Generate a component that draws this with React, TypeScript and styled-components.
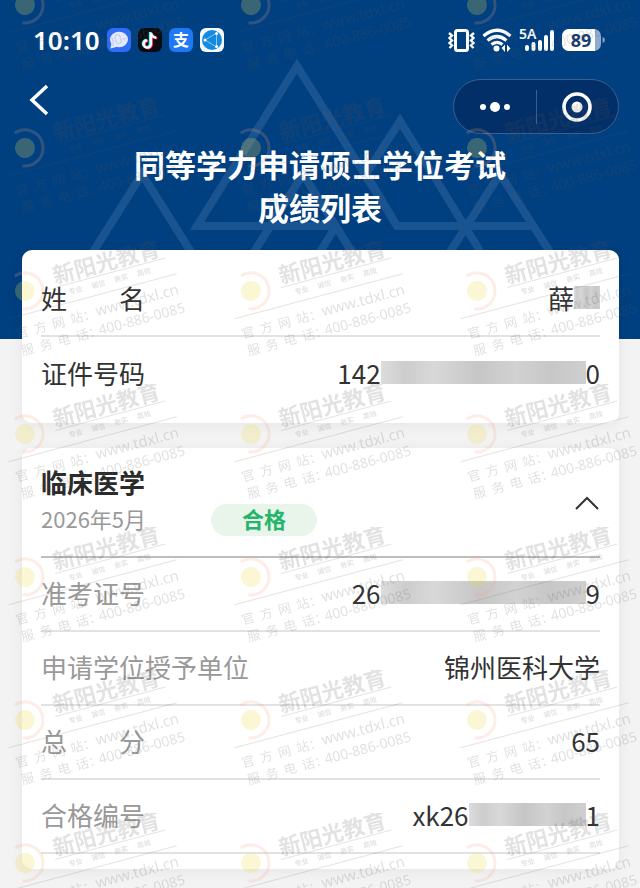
import React, { useState } from 'react'
import styled, { createGlobalStyle } from 'styled-components'

const GlobalStyle = createGlobalStyle`
    * {
        box-sizing: border-box;
    }

    body {
        margin: 0;
        background: #f3f3f4;
        font-family: 'Noto Sans CJK SC', sans-serif;
        color: #333;
    }
`

const Page = styled.div`
    position: relative;
    min-height: 100vh;
    padding-bottom: 16px;
    overflow: hidden;
`

const Header = styled.header`
    position: relative;
    padding-bottom: 111px;
    overflow: hidden;
    background: #003f80;
    color: #fff;
`

const Mountains = styled.svg`
    position: absolute;
    top: 0;
    left: 50%;
    transform: translateX(-50%);
`

const StatusBar = styled.div`
    position: relative;
    display: flex;
    align-items: center;
    justify-content: space-between;
    height: 79px;
    padding: 0 35px 0 33px;
`

const StatusGroup = styled.div`
    display: flex;
    align-items: center;
    gap: 7px;

    svg {
        overflow: visible;
    }
`

const Clock = styled.time`
    font: 600 26px/36px 'Noto Sans', sans-serif;
`

const NavBar = styled.nav`
    position: relative;
    display: flex;
    align-items: flex-start;
    justify-content: space-between;
    padding: 0 21px 0 28px;
`

const IconButton = styled.button`
    display: flex;
    align-items: center;
    justify-content: center;
    padding: 0;
    border: 0;
    background: none;
    color: inherit;
    cursor: pointer;
`

const BackButton = styled(IconButton)`
    padding: 5px 0;
`

const Capsule = styled.div`
    display: flex;
    align-items: center;
    width: 166px;
    height: 55px;
    border: 1px solid #3c5f92;
    border-radius: 28px;
    background: #022f67;
`

const CapsuleButton = styled(IconButton)`
    flex: 1;
    height: 34px;

    & + & {
        border-left: 1px solid #3c5f92;
    }
`

const Title = styled.h1`
    position: relative;
    margin: 8px 0 0;
    font-size: 31px;
    line-height: 43px;
    font-weight: 700;
    text-align: center;
`

const Content = styled.main`
    position: relative;
    display: flex;
    flex-direction: column;
    gap: 25px;
    margin-top: -89px;
    padding: 0 21px 0 22px;
`

const Card = styled.section`
    padding: 0 19px;
    border-radius: 10px;
    background: #fff;
    box-shadow: 0 2px 14px rgba(0, 0, 0, 0.06);
`

const Rows = styled.dl<{ padTop: number; padBottom: number }>`
    margin: 0;
    padding: ${({ padTop, padBottom }) => `${padTop}px 0 ${padBottom}px`};
`

const Row = styled.div<{ divider: boolean }>`
    display: flex;
    align-items: center;
    justify-content: space-between;
    height: 74px;
    padding-bottom: 3px;
    border-bottom: ${({ divider }) => (divider ? '2px solid #e2e2e2' : '0')};
    font-size: 26px;
    line-height: 36px;
`

const Label = styled.dt<{ muted?: boolean }>`
    color: ${({ muted }) => (muted ? '#999' : '#333')};
`

const Value = styled.dd`
    display: flex;
    align-items: center;
    margin: 0;
`

const Mask = styled.span<{ size: number }>`
    width: ${({ size }) => size}px;
    height: 23px;
    background: linear-gradient(90deg, #dcdcdc, #cdcdcd 12%, #d8d8d8 26%, #c6c6c6 48%, #d2d2d2 66%, #c7c7c7 82%, #cfcfcf);
`

const ResultHead = styled.div`
    display: flex;
    align-items: center;
    padding: 16px 0 20px;
    border-bottom: 2px solid #bdbdbd;
`

const Subject = styled.div`
    width: 170px;
`

const SubjectName = styled.h2`
    margin: 0;
    font-size: 26px;
    line-height: 36px;
    font-weight: 700;
    color: #2b2b2b;
`

const ExamDate = styled.p`
    margin: 0;
    font-size: 22px;
    line-height: 36px;
    color: #999;
`

const Badge = styled.span`
    align-self: flex-end;
    width: 106px;
    padding-bottom: 4px;
    border-radius: 16px;
    background: #e9f5ea;
    color: #25b56a;
    font-size: 22px;
    line-height: 28px;
    font-weight: 700;
    text-align: center;
`

const Toggle = styled(IconButton)<{ open: boolean }>`
    margin-left: auto;
    padding-top: 6px;

    svg {
        transform: ${({ open }) => (open ? 'none' : 'rotate(180deg)')};
    }
`

const WatermarkLayer = styled.svg`
    position: absolute;
    top: 0;
    left: 0;
    width: 100%;
    height: 100%;
    pointer-events: none;
    user-select: none;

    text {
        white-space: pre;
    }
`

interface Field {
    label: string
    start: string
    mask?: number
    end?: string
}

const person: Field[] = [
    { label: '姓\u3000\u3000名', start: '薛', mask: 26 },
    { label: '证件号码', start: '142', mask: 205, end: '0' },
]

const result: Field[] = [
    { label: '准考证号', start: '26', mask: 205, end: '9' },
    { label: '申请学位授予单位', start: '锦州医科大学' },
    { label: '总\u3000\u3000分', start: '65' },
    { label: '合格编号', start: 'xk26', mask: 117, end: '1' },
]

interface FieldRowProps {
    field: Field
    muted?: boolean
    divider: boolean
}

const FieldRow = ({ field, muted, divider }: FieldRowProps) => (
    <Row divider={divider}>
        <Label muted={muted}>{field.label}</Label>
        <Value>
            {field.start}
            {field.mask && <Mask size={field.mask} />}
            {field.end}
        </Value>
    </Row>
)

const AppIcons = () => (
    <>
        <svg width="24" height="24" viewBox="0 0 24 24">
            <rect width="24" height="24" rx="6" fill="#2f6df6" />
            <ellipse cx="12" cy="11.5" rx="9" ry="7.8" fill="#e3e9ff" />
            <path d="M4.5 14 L3.5 20.5 L11 18.5 Z" fill="#e3e9ff" />
        </svg>
        <svg width="24" height="24" viewBox="0 0 24 24" fill="none" strokeWidth="2.4">
            <rect width="24" height="24" rx="6" fill="#0b0b14" />
            <path d="M12 4 V15.6 A3.6 3.6 0 1 1 8.4 12 M12 4.6 Q13 8.8 17.4 9.2" stroke="#25f4ee" />
            <path d="M13.8 5 V16.6 A3.6 3.6 0 1 1 10.2 13 M13.8 5.6 Q14.8 9.8 19.2 10.2" stroke="#fe2c55" />
            <path d="M12.9 4.5 V16 A3.6 3.6 0 1 1 9.3 12.4 M12.9 5 Q13.9 9.3 18.3 9.7" stroke="#fff" />
        </svg>
        <svg width="24" height="24" viewBox="0 0 24 24">
            <rect width="24" height="24" rx="6" fill="#1f78f5" />
            <text x="12" y="18" fontSize="16" fontWeight="700" textAnchor="middle" fill="#fff">
                支
            </text>
        </svg>
        <svg width="24" height="24" viewBox="0 0 24 24">
            <rect width="24" height="24" rx="6" fill="#f4f9fd" />
            <circle cx="12" cy="12" r="10" fill="#1689e0" />
            <path d="M5 12 L16.5 5 V19 Z" fill="none" stroke="#8cc8f5" strokeWidth="1" />
            <g fill="#fff">
                <circle cx="5" cy="12" r="1.5" />
                <circle cx="16.5" cy="5.5" r="1.5" />
                <circle cx="16.5" cy="18.5" r="1.5" />
            </g>
        </svg>
    </>
)

const SystemIcons = () => (
    <>
        <svg width="27" height="24" viewBox="0 0 27 24" fill="none" stroke="#fff">
            <rect x="7.5" y="2.5" width="12" height="20" rx="2" strokeWidth="3" />
            <path
                d="M1 5 L4 7.5 L1.5 10 L4 12.5 L1.5 15 L4 17.5 L1.5 20 M26 5 L23 7.5 L25.5 10 L23 12.5 L25.5 15 L23 17.5 L25.5 20"
                strokeWidth="2.4"
            />
        </svg>
        <svg width="30" height="24" viewBox="0 0 30 24" fill="none" stroke="#fff" strokeWidth="3.2">
            <path d="M1.5 8 Q15 -3.5 28.5 8 M5.5 12.5 Q15 4.5 24.5 12.5 M9.5 16.6 Q15 12 20.5 16.6" />
            <circle cx="14.5" cy="20.5" r="3" fill="#fff" stroke="none" />
            <path d="M19.5 20 L23 16.5 V24 Z M28.5 20.5 L25 16.5 V24 Z" fill="#fff" stroke="none" />
        </svg>
        <svg width="36" height="24" viewBox="0 0 36 24" fill="#fff">
            <text x="0" y="11" fontSize="14" fontWeight="600" fontFamily="Noto Sans">
                5A
            </text>
            <rect x="6" y="17" width="4" height="6" rx="2" />
            <rect x="12.5" y="14" width="4" height="9" rx="2" />
            <rect x="19" y="12" width="4" height="11" rx="2" />
            <rect x="25" y="7" width="4" height="16" rx="2" />
            <rect x="31" y="2" width="4" height="21" rx="2" />
        </svg>
        <svg width="43" height="24" viewBox="0 0 43 24">
            <rect x="0" y="1" width="39" height="22" rx="7" fill="#8fa9cf" />
            <path d="M7 1 H33 V23 H7 A7 7 0 0 1 0 16 V8 A7 7 0 0 1 7 1 Z" fill="#fff" />
            <path d="M40.5 9 Q43 9.5 43 12 Q43 14.5 40.5 15 Z" fill="#7e9cc6" />
            <text x="19" y="18.5" fontSize="18" fontWeight="700" fontFamily="Noto Sans" textAnchor="middle" fill="#173c6e">
                89
            </text>
        </svg>
    </>
)

const Watermark = () => (
    <WatermarkLayer aria-hidden="true">
        <defs>
            <pattern id="mark" x="0" y="-45" width="226" height="143" patternUnits="userSpaceOnUse">
                <g transform="translate(25 50) rotate(-15)" fill="#555">
                    <circle r="10" fill="#efdc50" opacity="0.24" />
                    <path d="M-6 -17 A18 18 0 1 1 -7 16.5" fill="none" stroke="#f3a584" strokeWidth="3" opacity="0.2" />
                    <text x="31" y="1" fontSize="22" fontWeight="700" opacity="0.17">
                        新阳光教育
                    </text>
                    <path d="M30 4.5 H144 M-23 22.5 H151" stroke="#555" opacity="0.16" />
                    <text x="42" y="15" fontSize="7" fontWeight="700" opacity="0.17">
                        {'专业      诚信      务实      高效'}
                    </text>
                    <g opacity="0.18">
                        <text x="-20" y="44" fontSize="13">
                            {'官  方  网  站：'}
                        </text>
                        <text x="63" y="43" fontSize="15" fontFamily="Noto Sans">
                            www.tdxl.cn
                        </text>
                        <text x="-19" y="62" fontSize="13">
                            {'服  务  电  话：'}
                        </text>
                        <text x="61" y="62" fontSize="14" fontFamily="Noto Sans">
                            400-886-0085
                        </text>
                    </g>
                </g>
            </pattern>
        </defs>
        <rect width="100%" height="100%" fill="url(#mark)" />
    </WatermarkLayer>
)

const App: React.FunctionComponent = () => {
    const [open, setOpen] = useState(true)

    return (
        <Page>
            <GlobalStyle />
            <Header>
                <Mountains width="640" height="339" viewBox="0 0 640 339" fill="none" stroke="#1a5490" strokeWidth="8" aria-hidden="true">
                    <path d="M397 226 L297 66 L197 226 H336" />
                    <path d="M366 174 L400 121 L480 251 M366 174 L397 226 H534" />
                    <path d="M93 252 L142 174 L191 252" />
                    <path d="M254 252 L303 174 L352 252 M320 252 L336 226" />
                    <path d="M450 252 L500 174 L550 252" />
                </Mountains>
                <StatusBar>
                    <StatusGroup>
                        <Clock>10:10</Clock>
                        <AppIcons />
                    </StatusGroup>
                    <StatusGroup>
                        <SystemIcons />
                    </StatusGroup>
                </StatusBar>
                <NavBar>
                    <BackButton type="button" aria-label="返回">
                        <svg width="22" height="32" viewBox="0 0 22 32" fill="none" stroke="#fff" strokeWidth="3.5">
                            <path d="M19 2 L4 16 L19 30" />
                        </svg>
                    </BackButton>
                    <Capsule>
                        <CapsuleButton type="button" aria-label="更多">
                            <svg width="30" height="12" viewBox="0 0 30 12" fill="#fff">
                                <circle cx="3" cy="6" r="3" />
                                <circle cx="15" cy="6" r="5" />
                                <circle cx="27" cy="6" r="3" />
                            </svg>
                        </CapsuleButton>
                        <CapsuleButton type="button" aria-label="关闭">
                            <svg width="30" height="30" viewBox="0 0 30 30">
                                <circle cx="15" cy="15" r="13" fill="none" stroke="#fff" strokeWidth="3.6" />
                                <circle cx="15" cy="15" r="5.5" fill="#fff" />
                            </svg>
                        </CapsuleButton>
                    </Capsule>
                </NavBar>
                <Title>
                    同等学力申请硕士学位考试
                    <br />
                    成绩列表
                </Title>
            </Header>
            <Content>
                <Card>
                    <Rows padTop={13} padBottom={12}>
                        {person.map((field, i) => (
                            <FieldRow key={field.label} field={field} divider={i < person.length - 1} />
                        ))}
                    </Rows>
                </Card>
                <Card>
                    <ResultHead>
                        <Subject>
                            <SubjectName>临床医学</SubjectName>
                            <ExamDate>2026年5月</ExamDate>
                        </Subject>
                        <Badge>合格</Badge>
                        <Toggle type="button" open={open} aria-label="展开或收起" aria-expanded={open} onClick={() => setOpen(!open)}>
                            <svg width="26" height="16" viewBox="0 0 26 16" fill="none" stroke="#333" strokeWidth="2">
                                <path d="M2 14 L13 3 L24 14" />
                            </svg>
                        </Toggle>
                    </ResultHead>
                    {open && (
                        <Rows padTop={0} padBottom={15}>
                            {result.map((field) => (
                                <FieldRow key={field.label} field={field} muted divider />
                            ))}
                        </Rows>
                    )}
                </Card>
            </Content>
            <Watermark />
        </Page>
    )
}

export default App
